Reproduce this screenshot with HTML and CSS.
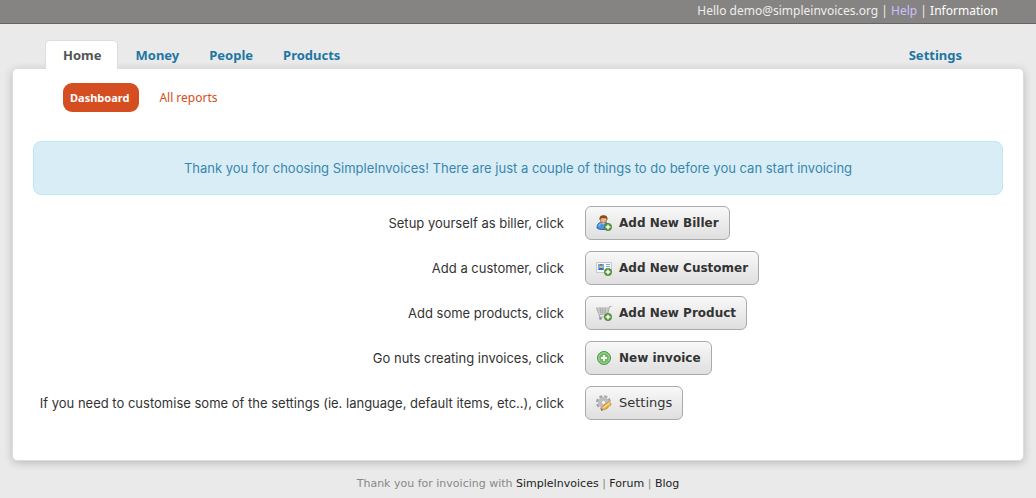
FILE: index.html
```html
<!DOCTYPE html>
<html lang="en">
<head>
<meta charset="utf-8">
<title>SimpleInvoices</title>
<link rel="stylesheet" href="styles.css">
</head>
<body>
<header class="topbar">Hello demo@simpleinvoices.org | <a class="help" href="#">Help</a> | <a href="#">Information</a></header>
<div class="page">
  <nav class="tabs">
    <a class="tab active" href="#">Home</a>
    <a class="tab" href="#">Money</a>
    <a class="tab" href="#">People</a>
    <a class="tab" href="#">Products</a>
    <a class="tab last" href="#">Settings</a>
  </nav>
  <main class="panel">
    <nav class="subnav">
      <a class="current" href="#">Dashboard</a>
      <a href="#">All reports</a>
    </nav>
    <p class="notice">Thank you for choosing SimpleInvoices! There are just a couple of things to do before you can start invoicing</p>
    <div class="steps">
      <span class="label" id="l1">Setup yourself as biller, click</span>
      <div><button type="button" class="btn strong" aria-describedby="l1">
        <svg viewBox="0 0 16 16"><path d="M1 13c0-4 2-6 6-6s6 2 6 6c-2 2-10 2-12 0z" fill="#4b93e3" stroke="#2768ae"/><path d="M3 11c1-2 2-3 3-3" stroke="#a9d2ff" fill="none"/><path d="M5.500 7.500l2 2 2-2z" fill="#e9f3ff"/><circle cx="7.500" cy="4.800" r="3.200" fill="#f1b27c" stroke="#9b592b" stroke-width=".7"/><path d="M3.500 5C3 1.500 5 .3 7.500.3s4.500 1.200 4 4.700L10 3.200 6 3z" fill="#8a4a1d"/><circle cx="12" cy="12" r="3.700" fill="#5d9a3e" stroke="#437e29" stroke-width=".6"/><path d="M12 9.700v4.600M9.700 12h4.600" stroke="#fff" stroke-width="1.500"/></svg>
        Add New Biller</button></div>
      <span class="label" id="l2">Add a customer, click</span>
      <div><button type="button" class="btn strong" aria-describedby="l2">
        <svg viewBox="0 0 16 16"><path d="M.5 2.500h15v10H.5z" fill="#f5f7f8" stroke="#c3c9ce"/><path d="M2 4h6v6H2z" fill="#71b1ed"/><path d="M2.500 10c0-3 5-3 5 0z" fill="#286eb5"/><circle cx="5" cy="6.500" r="1.500" fill="#efb17d"/><path d="M3.400 6c0-2.500 3.200-2.500 3.200 0L5 5.300z" fill="#80502d"/><path d="M10 4.500h4M10 6.500h4" stroke="#82aacb"/><circle cx="12" cy="12" r="3.700" fill="#5d9a3e" stroke="#437e29" stroke-width=".6"/><path d="M12 9.700v4.600M9.700 12h4.600" stroke="#fff" stroke-width="1.500"/></svg>
        Add New Customer</button></div>
      <span class="label" id="l3">Add some products, click</span>
      <div><button type="button" class="btn strong" aria-describedby="l3">
        <svg viewBox="0 0 16 16"><path d="M.5 3h12.300l-1 6H3z" fill="#e6e6e6"/><path d="M15.500 1.500h-2L11.700 9 3 9.500.5 3h12.300M1.500 5h11M2.300 7h10M4 3l1 6M6.500 3l.5 6M9.300 3L9 9M4 9.500L3 12h6" fill="none" stroke="#9c9c9c" stroke-width=".8"/><circle cx="4.500" cy="13.500" r="1.300" fill="#888"/><circle cx="12" cy="12" r="3.700" fill="#5d9a3e" stroke="#437e29" stroke-width=".6"/><path d="M12 9.700v4.600M9.700 12h4.600" stroke="#fff" stroke-width="1.500"/></svg>
        Add New Product</button></div>
      <span class="label" id="l4">Go nuts creating invoices, click</span>
      <div><button type="button" class="btn strong" aria-describedby="l4">
        <svg viewBox="0 0 16 16"><circle cx="8" cy="8" r="6.500" fill="#70bb61" stroke="#479449"/><circle cx="8" cy="8" r="5.300" fill="none" stroke="#a9dc9d" stroke-width=".9"/><path d="M8 5v6M5 8h6" stroke="#fff" stroke-width="2"/></svg>
        New invoice</button></div>
      <span class="label" id="l5">If you need to customise some of the settings (ie. language, default items, etc..), click</span>
      <div><button type="button" class="btn" aria-describedby="l5">
        <svg viewBox="0 0 16 16"><circle cx="7.500" cy="7.500" r="6.200" fill="none" stroke="#a0a0a0" stroke-width="2.400" stroke-dasharray="2.900 1.970"/><circle cx="7.500" cy="7.500" r="4" fill="none" stroke="#bebebe" stroke-width="3.200"/><circle cx="7.500" cy="7.500" r="2.200" fill="#f1f1f1" stroke="#999" stroke-width=".7"/><path d="M5.500 15.300l.8-3.600 6.500-5 2.500 2.800-6.500 5z" fill="#f7bd45" stroke="#cc852a" stroke-width=".8"/><path d="M7.300 12.700l6.500-5" stroke="#ffe69a"/><path d="M5.500 15.300l.8-3.600 2.200 2.600z" fill="#dfa67b"/><path d="M5.300 15.500l.3-1.600 1.200 1z" fill="#333"/></svg>
        Settings</button></div>
    </div>
  </main>
</div>
<footer class="footer">Thank you for invoicing with <a href="#">SimpleInvoices</a> | <a href="#">Forum</a> | <a href="#">Blog</a></footer>
</body>
</html>
```
FILE: styles.css
```css
* { box-sizing: border-box; }
body {
  margin: 0;
  background: #eaeaea;
  color: #333;
  font: 13px/18px Inter, sans-serif;
}
a { text-decoration: none; }
.topbar {
  height: 24px;
  padding: 0 38px;
  border-bottom: 1px solid #666;
  background: #868482;
  color: #eee;
  font: 12px/22px "Noto Sans", sans-serif;
  text-align: right;
}
.topbar a { color: #fff; }
.topbar .help { color: #ccbfff; }
.page { padding: 16px 12px 0; }
.tabs {
  position: relative;
  z-index: 1;
  display: flex;
  padding: 0 47px 0 33px;
}
.tab {
  height: 28px;
  padding: 0 14px;
  border: 1px solid transparent;
  border-bottom: 0;
  color: #1d76a3;
  font: bold 13px/29px "Noto Sans", sans-serif;
}
.tab.active {
  height: 29px;
  margin: 0 3px -1px 0;
  padding: 0 15px 0 17px;
  border-color: #ddd;
  border-radius: 5px 5px 0 0;
  background: #fff;
  color: #555;
}
.tab.last { margin-left: auto; }
.panel {
  padding: 14px 20px 40px;
  border: 1px solid #ddd;
  border-radius: 5px;
  background: #fff;
  box-shadow: 0 2px 8px rgba(0, 0, 0, 0.2);
}
.subnav {
  display: flex;
  gap: 12px;
  padding-left: 30px;
}
.subnav a {
  padding: 0 8px;
  border-radius: 9px;
  color: #d54e21;
  font: 12px/29px "Noto Sans", sans-serif;
}
.subnav .current {
  padding: 0 10px 0 7px;
  background: #d54e21;
  color: #fff;
  font-size: 11px;
  font-weight: bold;
}
.notice {
  margin: 29px 0 11px;
  padding: 17px 20px;
  border: 1px solid #bce8f1;
  border-radius: 8px;
  background: #d9edf7;
  color: #3a87ad;
  text-align: center;
}
.steps {
  display: grid;
  grid-template-columns: minmax(0, 541fr) minmax(0, 418fr);
  gap: 11px 21px;
  align-items: center;
  margin-left: -10px;
}
.label {
  justify-self: end;
  text-align: right;
  white-space: nowrap;
}
.steps > div { display: flex; }
.btn {
  display: inline-flex;
  align-items: center;
  gap: 7px;
  height: 34px;
  padding: 0 10px;
  border: 1px solid #aaa;
  border-radius: 6px;
  background: linear-gradient(#f8f8f8, #dfdfdf);
  color: #333;
  font: 13px/18px "DejaVu Sans", sans-serif;
}
.btn.strong {
  font-size: 12px;
  font-weight: bold;
}
.btn svg { width: 16px; height: 16px; }
.footer {
  padding: 14px 0;
  color: #888;
  font: 11px/18px "DejaVu Sans", sans-serif;
  text-align: center;
}
.footer a { color: #222; }
```
